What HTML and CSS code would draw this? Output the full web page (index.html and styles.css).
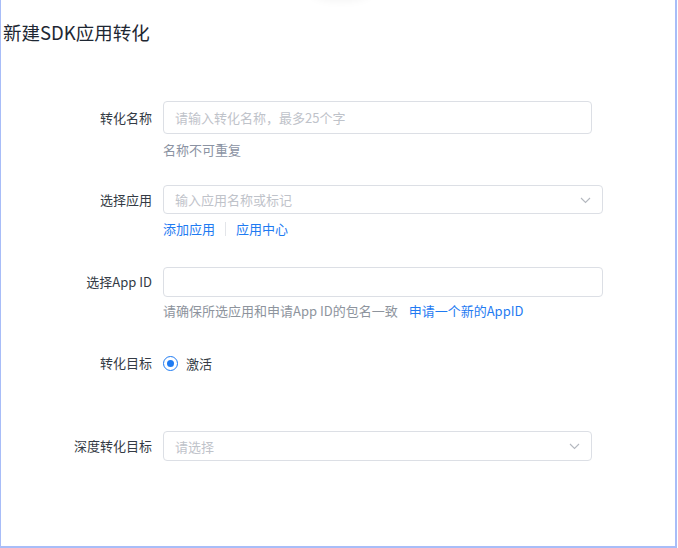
FILE: index.html
```html
<!DOCTYPE html>
<html lang="zh-CN">
<head>
<meta charset="utf-8">
<title>新建SDK应用转化</title>
<link rel="stylesheet" href="styles.css">
</head>
<body>
<div class="frame">
  <div class="top-shadow"></div>
  <h1 class="title">新建SDK应用转化</h1>

  <div class="item item-first">
    <div class="row">
      <label class="label">转化名称</label>
      <div class="input w429 h33"><span class="ph">请输入转化名称，最多25个字</span></div>
    </div>
    <div class="extra hint hint-1">名称不可重复</div>
  </div>

  <div class="item item-2">
    <div class="row">
      <label class="label">选择应用</label>
      <div class="input select w440 h29"><span class="ph">输入应用名称或标记</span>
        <svg class="chev" width="11" height="7" viewBox="0 0 11 7"><path d="M1 1l4.5 4.5L10 1" fill="none" stroke="#b4b8bf" stroke-width="1.1"/></svg>
      </div>
    </div>
    <div class="extra links"><a class="link">添加应用</a><span class="sep"></span><a class="link">应用中心</a></div>
  </div>

  <div class="item item-3">
    <div class="row">
      <label class="label">选择App ID</label>
      <div class="input w440 h30"></div>
    </div>
    <div class="extra hint hint-3">请确保所选应用和申请App ID的包名一致<a class="link apply">申请一个新的AppID</a></div>
  </div>

  <div class="item item-4">
    <div class="row">
      <label class="label">转化目标</label>
      <div class="radio-wrap"><span class="radio"><span class="dot"></span></span><span class="radio-text">激活</span></div>
    </div>
  </div>

  <div class="item item-5">
    <div class="row">
      <label class="label">深度转化目标</label>
      <div class="input select w429 h30"><span class="ph">请选择</span>
        <svg class="chev" width="11" height="7" viewBox="0 0 11 7"><path d="M1 1l4.5 4.5L10 1" fill="none" stroke="#b4b8bf" stroke-width="1.1"/></svg>
      </div>
    </div>
  </div>
</div>
</body>
</html>
```

FILE: styles.css
```css
* { box-sizing: border-box; }
html, body { margin: 0; padding: 0; background: #fff; }
body {
  font-family: "PingFang SC", "Noto Sans CJK SC", "Noto Sans", sans-serif;
  font-size: 13px;
  color: #343b45;
}
.frame {
  position: relative;
  width: 677px;
  height: 548px;
  border-left: 1px solid #a8bdf8;
  border-right: 2px solid #a8bdf8;
  border-bottom: 2px solid #a8bdf8;
  overflow: hidden;
}
.top-shadow {
  position: absolute;
  top: -24px;
  left: 308px;
  width: 64px;
  height: 24px;
  border-radius: 50%;
  box-shadow: 0 1px 10px rgba(0, 0, 0, 0.05);
}
.title {
  margin: 0;
  padding: 20px 0 0 2px;
  font-size: 18.5px;
  line-height: 24px;
  font-weight: 400;
  color: #1e2733;
}
.item-first { margin-top: 57px; }
.item-2 { margin-top: 25px; }
.item-3 { margin-top: 28px; }
.item-4 { margin-top: 32px; }
.item-5 { margin-top: 58px; }
.row {
  display: flex;
  align-items: center;
  gap: 11px;
}
.label {
  width: 151px;
  text-align: right;
  color: #343b45;
  line-height: 20px;
}
.input {
  position: relative;
  display: flex;
  align-items: center;
  border: 1px solid #dcdfe5;
  border-radius: 4px;
  padding-left: 11px;
}
.w429 { width: 429px; }
.w440 { width: 440px; }
.h33 { height: 33px; }
.h29 { height: 29px; }
.h30 { height: 30px; }
.ph { color: #bfc3ca; }
.chev { position: absolute; right: 11px; top: 50%; margin-top: -3px; }
.extra {
  padding-left: 162px;
  line-height: 20px;
}
.hint { color: #8e949d; }
.hint-1 { margin-top: 6px; color: #8b93a3; }
.hint-3 { margin-top: 4px; }
.links {
  margin-top: 5px;
  display: flex;
  align-items: center;
}
.link { color: #1f7bf2; text-decoration: none; }
.sep {
  display: inline-block;
  width: 1px;
  height: 14px;
  background: #e3e5e9;
  margin: 0 10px;
}
.apply { margin-left: 11px; }
.radio-wrap {
  display: flex;
  align-items: center;
  height: 20px;
}
.radio {
  width: 15px;
  height: 15px;
  border: 1.5px solid #1f7bf2;
  border-radius: 50%;
  display: flex;
  align-items: center;
  justify-content: center;
}
.dot {
  width: 7px;
  height: 7px;
  border-radius: 50%;
  background: #1f7bf2;
}
.radio-text { margin-left: 8px; color: #343b45; }
```
